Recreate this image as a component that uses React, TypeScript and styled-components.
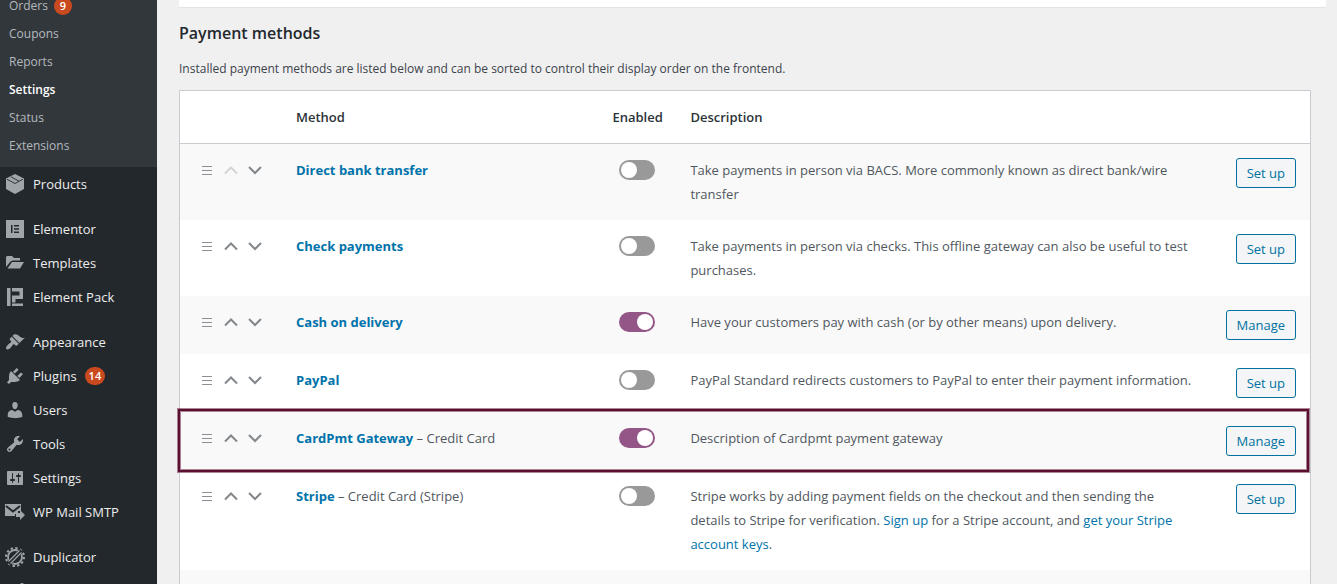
import React from "react";
import styled, { createGlobalStyle, css } from "styled-components";

const GlobalStyle = createGlobalStyle`
  *, *::before, *::after { box-sizing: border-box; }
  body {
    margin: 0;
    background: #f0f0f1;
    color: #3c434a;
    font: 13px/18px "Segoe UI", "Open Sans", sans-serif;
  }
`;

const Page = styled.div`
  display: flex;
  height: 100vh;
  overflow: hidden;
`;

const Sidebar = styled.nav`
  flex: 0 0 157px;
  background: #23282d;
`;

const Submenu = styled.ul`
  list-style: none;
  margin: -8px 0 0;
  padding: 0 0 7px;
  background: #32373c;
`;

const SubLink = styled.a<{ $current?: boolean }>`
  display: flex;
  align-items: center;
  gap: 6px;
  height: 28px;
  padding-left: 9px;
  color: ${(p) => (p.$current ? "#fff" : "#b4b9be")};
  font-size: 12px;
  font-weight: ${(p) => (p.$current ? 600 : 400)};
  text-decoration: none;
`;

const MenuGroup = styled.ul`
  list-style: none;
  margin: 0 0 11px;
  padding: 0;
`;

const MenuLink = styled.a`
  display: flex;
  align-items: center;
  height: 34px;
  padding-left: 5px;
  gap: 8px;
  color: #eee;
  text-decoration: none;
  white-space: nowrap;
`;

const MenuIcon = styled.svg`
  flex: none;
  width: 20px;
  height: 20px;
  fill: #a0a5aa;
`;

const Badge = styled.span`
  min-width: 18px;
  height: 18px;
  padding: 0 4px;
  border-radius: 9px;
  background: #ca4a1f;
  color: #fff;
  font-size: 11px;
  font-weight: 600;
  line-height: 18px;
  text-align: center;
`;

const Content = styled.main`
  flex: 1;
  min-width: 0;
  padding-left: 22px;
`;

const TopPanel = styled.div`
  height: 8px;
  margin-right: 11px;
  background: #fff;
  border-bottom: 1px solid #e2e4e7;
`;

const Section = styled.section`
  margin-right: 26px;
`;

const Heading = styled.h2`
  margin: 13px 0 0;
  color: #23282d;
  font-size: 16px;
  font-weight: 600;
  line-height: 24px;
`;

const Intro = styled.p`
  margin: 15px 0 12px;
  font-size: 12px;
  line-height: 18px;
`;

const Gateways = styled.table`
  width: 100%;
  table-layout: fixed;
  border-collapse: separate;
  border-spacing: 0;
  border: 1px solid #c8cbd0;
  background: #fff;
  font-size: 13px;
  line-height: 24px;
`;

const SortCol = styled.col`
  width: 102px;
`;

const MethodCol = styled.col`
  width: 28%;
`;

const EnabledCol = styled.col`
  width: 78px;
`;

const ActionCol = styled.col`
  width: 101px;
`;

const HeadCell = styled.th<{ $center?: boolean }>`
  height: 53px;
  padding: 0 14px;
  border-bottom: 1px solid #c8cbd0;
  color: #2c3338;
  font-weight: 600;
  text-align: ${(p) => (p.$center ? "center" : "left")};
  white-space: nowrap;
`;

const Cell = styled.td<{ $align?: string }>`
  padding: 14px;
  vertical-align: top;
  text-align: ${(p) => p.$align || "left"};
  color: #50575e;
`;

const SortCell = styled(Cell)`
  padding-left: 15px;
`;

const Row = styled.tr<{ $highlight?: boolean }>`
  position: relative;
  &:nth-child(odd) { background: #f9f9f9; }
  ${(p) =>
    p.$highlight &&
    css`
      ${SortCell}::after {
        content: "";
        position: absolute;
        inset: -3px 1px -2px -2px;
        border: 2px solid #5b0f31;
        box-shadow: 0 0 0 1px #5b0f3180, inset 0 0 0 1px #5b0f3180;
        pointer-events: none;
      }
    `}
`;

const Sorter = styled.div`
  display: flex;
  height: 24px;
`;

const SortButton = styled.button`
  width: 24px;
  height: 24px;
  padding: 0;
  border: 0;
  background: none;
  color: #82878c;
  &:disabled { color: #d5d5d5; }
  svg { display: block; fill: none; stroke: currentColor; }
`;

const MethodName = styled.a`
  color: #0073aa;
  font-weight: 700;
  text-decoration: none;
`;

const TextLink = styled.a`
  color: #0073aa;
  text-decoration: none;
`;

const Toggle = styled.input`
  appearance: none;
  display: block;
  width: 36px;
  height: 20px;
  margin: 2px auto;
  padding: 2px;
  border-radius: 10px;
  background: #999;
  &::before {
    content: "";
    display: block;
    width: 16px;
    height: 16px;
    border-radius: 8px;
    background: #fff;
  }
  &:checked { background: #935687; }
  &:checked::before { margin-left: auto; }
`;

const ActionButton = styled.button`
  height: 30px;
  padding: 0 10px;
  border: 1px solid #0071a1;
  border-radius: 3px;
  background: #f3f5f6;
  color: #0071a1;
  font: inherit;
  line-height: 28px;
  vertical-align: top;
  white-space: nowrap;
`;

const icons: Record<string, React.ReactNode> = {
  products: (
    <>
      <path d="M10 0 19 4.500V15L10 20 1 15V4.500Z" />
      <path d="M2 5.200 10 9.500 18 5.200M6 2.800 14 7.200" fill="none" stroke="#23282d" strokeWidth="0.900" />
    </>
  ),
  elementor: <path fillRule="evenodd" d="M1 1H19V19H1ZM6 6V14H7.500V6ZM9 6V7.500H14V6ZM9 9.200V10.800H14V9.200ZM9 12.500V14H14V12.500Z" />,
  templates: <path d="M1 4 2 3H7L9 5H15V7.500H7.500L5.500 8.500 1 14ZM2.500 15.500 7 9H19L15 15.500Z" />,
  pack: <path d="M2 1H5.500V19H2ZM7 1H18V12H10.500V15.500H7V8.500H14.500V4.500H7ZM7 16.500H18V19H7Z" />,
  appearance: <path d="M14.480 11.060 7.410 3.990l1.500-1.500c.5-.56 2.300-.47 3.510.32 1.210.8 1.430 1.280 2.910 2.100 1.180.64 2.450 1.260 4.450.85zm-.71.71L6.700 4.700 4.930 6.470c-.39.39-.39 1.020 0 1.410l1.060 1.060c.39.39.39 1.030 0 1.420-.6.600-1.430 1.110-2.210 1.690-.35.26-.7.53-1.010.84C1.430 14.230.400 16.080 1.400 17.070c.990 1 2.840-.03 4.180-1.360.31-.31.58-.66.85-1.020.57-.78 1.080-1.610 1.690-2.210.39-.39 1.020-.39 1.410 0l1.060 1.060c.39.39 1.020.39 1.410 0z" />,
  plugins: <path d="M13.110 4.360 9.870 7.600 8 5.730l3.240-3.240c.35-.34 1.050-.2 1.560.32.520.51.660 1.210.310 1.550zm-8 1.770.910-1.120 9.010 9.010-1.190.840c-.71.710-2.630 1.160-3.820 1.160H6.140L4.900 17.260c-.59.590-1.540.590-2.120 0-.59-.58-.59-1.530 0-2.120l1.240-1.240v-3.880c0-1.130.400-3.190 1.090-3.890zm7.260 3.970 3.240-3.240c.34-.35 1.040-.21 1.550.310.520.510.660 1.210.310 1.550l-3.240 3.250z" />,
  users: <path d="M10 9.250c-2.270 0-2.730-3.440-2.730-3.440C7 4.020 7.820 2 9.970 2c2.160 0 2.980 2.020 2.710 3.810 0 0-.41 3.440-2.680 3.440zm0 2.570L12.720 10c2.390 0 4.520 2.330 4.520 4.530v2.490s-3.650 1.130-7.240 1.130c-3.650 0-7.240-1.130-7.240-1.130v-2.490c0-2.250 1.940-4.480 4.470-4.480z" />,
  tools: <path d="M16.680 9.770c-1.340 1.340-3.300 1.670-4.950.99l-5.410 6.520c-.99.990-2.590.990-3.580 0s-.99-2.590 0-3.570l6.520-5.420c-.68-1.650-.35-3.610.99-4.950 1.280-1.280 3.120-1.620 4.720-1.060l-2.890 2.890 2.820 2.820 2.860-2.870c.53 1.580.180 3.390-1.080 4.650zM3.810 16.210c.4.390 1.040.390 1.430 0 .4-.4.4-1.040 0-1.430-.39-.4-1.030-.4-1.430 0-.39.390-.39 1.030 0 1.430z" />,
  settings: <path d="M18 16V4c0-.55-.45-1-1-1H3c-.55 0-1 .45-1 1v12c0 .55.450 1 1 1h14c.55 0 1-.45 1-1zM8 11h1c.55 0 1 .45 1 1s-.45 1-1 1H8v1.500c0 .28-.22.5-.5.5s-.5-.22-.5-.5V13H6c-.55 0-1-.45-1-1s.45-1 1-1h1V5.500c0-.28.220-.5.5-.5s.5.220.5.5V11zm5-2h-1c-.55 0-1-.45-1-1s.45-1 1-1h1V5.500c0-.28.220-.5.5-.5s.5.220.5.5V7h1c.55 0 1 .45 1 1s-.45 1-1 1h-1v5.500c0 .28-.22.5-.5.5s-.5-.22-.5-.5V9z" />,
  mail: (
    <>
      <path d="M0 2H16V9H13V12H10V14H0Z" />
      <path d="M1 4 8 9.500 15 4" fill="none" stroke="#23282d" strokeWidth="2" />
      <path d="M11 11H15V8L20 13 15 18V15H11Z" />
    </>
  ),
  duplicator: (
    <>
      <circle cx="10" cy="10" r="7" fill="none" stroke="#a0a5aa" strokeWidth="1.800" />
      <circle cx="10" cy="10" r="9" fill="none" stroke="#a0a5aa" strokeWidth="2" strokeDasharray="2.400 2.312" />
      <path d="M3.500 16.500 16.500 3.500" stroke="#23282d" strokeWidth="5" />
      <path d="M3.500 14.500 14.500 3.500M5.500 16.500 16.500 5.500" stroke="#a0a5aa" strokeWidth="1.200" />
    </>
  ),
  more: <circle cx="17" cy="4" r="2" />,
};

const submenu = [
  { label: "Orders", count: 9 },
  { label: "Coupons" },
  { label: "Reports" },
  { label: "Settings", current: true },
  { label: "Status" },
  { label: "Extensions" },
];

const menuGroups: { label?: string; icon: string; count?: number }[][] = [
  [{ label: "Products", icon: "products" }],
  [
    { label: "Elementor", icon: "elementor" },
    { label: "Templates", icon: "templates" },
    { label: "Element Pack", icon: "pack" },
  ],
  [
    { label: "Appearance", icon: "appearance" },
    { label: "Plugins", icon: "plugins", count: 14 },
    { label: "Users", icon: "users" },
    { label: "Tools", icon: "tools" },
    { label: "Settings", icon: "settings" },
    { label: "WP Mail SMTP", icon: "mail" },
  ],
  [{ label: "Duplicator", icon: "duplicator" }, { icon: "more" }],
];

interface Gateway {
  name: string;
  suffix?: string;
  enabled?: boolean;
  highlight?: boolean;
  description: React.ReactNode;
}

const gateways: Gateway[] = [
  { name: "Direct bank transfer", description: "Take payments in person via BACS. More commonly known as direct bank/wire transfer" },
  { name: "Check payments", description: "Take payments in person via checks. This offline gateway can also be useful to test purchases." },
  { name: "Cash on delivery", enabled: true, description: "Have your customers pay with cash (or by other means) upon delivery." },
  { name: "PayPal", description: "PayPal Standard redirects customers to PayPal to enter their payment information." },
  { name: "CardPmt Gateway", suffix: "Credit Card", enabled: true, highlight: true, description: "Description of Cardpmt payment gateway" },
  {
    name: "Stripe",
    suffix: "Credit Card (Stripe)",
    description: (
      <>
        Stripe works by adding payment fields on the checkout and then sending the details to Stripe for verification.{" "}
        <TextLink href="#signup">Sign up</TextLink> for a Stripe account, and{" "}
        <TextLink href="#keys">get your Stripe account keys</TextLink>.
      </>
    ),
  },
];

function SortControls({ name, first }: { name: string; first: boolean }) {
  return (
    <Sorter>
      <SortButton aria-label={`Drag ${name}`}>
        <svg width="24" height="24"><path d="M7 8.500H17M7 12.500H17M7 16.500H17" stroke="#8c8f94" /></svg>
      </SortButton>
      <SortButton aria-label={`Move ${name} up`} disabled={first}>
        <svg width="24" height="24"><path d="M6 15.500 12 9.500 18 15.500" strokeWidth="2" /></svg>
      </SortButton>
      <SortButton aria-label={`Move ${name} down`}>
        <svg width="24" height="24"><path d="M6 9 12 15 18 9" strokeWidth="2" /></svg>
      </SortButton>
    </Sorter>
  );
}

export default function App() {
  return (
    <Page>
      <GlobalStyle />
      <Sidebar aria-label="Admin menu">
        <Submenu>
          {submenu.map((item) => (
            <li key={item.label}>
              <SubLink href="#" $current={item.current}>
                {item.label}
                {item.count && <Badge>{item.count}</Badge>}
              </SubLink>
            </li>
          ))}
        </Submenu>
        {menuGroups.map((group) => (
          <MenuGroup key={group[0].icon}>
            {group.map((item) => (
              <li key={item.icon}>
                <MenuLink href="#" aria-label={item.label ? undefined : "More"}>
                  <MenuIcon viewBox="0 0 20 20" aria-hidden="true">{icons[item.icon]}</MenuIcon>
                  {item.label}
                  {item.count && <Badge>{item.count}</Badge>}
                </MenuLink>
              </li>
            ))}
          </MenuGroup>
        ))}
      </Sidebar>
      <Content>
        <TopPanel />
        <Section>
          <Heading>Payment methods</Heading>
          <Intro>Installed payment methods are listed below and can be sorted to control their display order on the frontend.</Intro>
          <Gateways>
            <colgroup>
              <SortCol />
              <MethodCol />
              <EnabledCol />
              <col />
              <ActionCol />
            </colgroup>
            <thead>
              <tr>
                <HeadCell />
                <HeadCell>Method</HeadCell>
                <HeadCell $center>Enabled</HeadCell>
                <HeadCell>Description</HeadCell>
                <HeadCell />
              </tr>
            </thead>
            <tbody>
              {gateways.map((g, i) => (
                <Row key={g.name} $highlight={g.highlight}>
                  <SortCell><SortControls name={g.name} first={i === 0} /></SortCell>
                  <Cell>
                    <MethodName href="#">{g.name}</MethodName>
                    {g.suffix && ` – ${g.suffix}`}
                  </Cell>
                  <Cell><Toggle type="checkbox" aria-label={`Enable ${g.name}`} defaultChecked={g.enabled} /></Cell>
                  <Cell>{g.description}</Cell>
                  <Cell $align="right"><ActionButton>{g.enabled ? "Manage" : "Set up"}</ActionButton></Cell>
                </Row>
              ))}
              <Row><Cell colSpan={5} /></Row>
            </tbody>
          </Gateways>
        </Section>
      </Content>
    </Page>
  );
}
